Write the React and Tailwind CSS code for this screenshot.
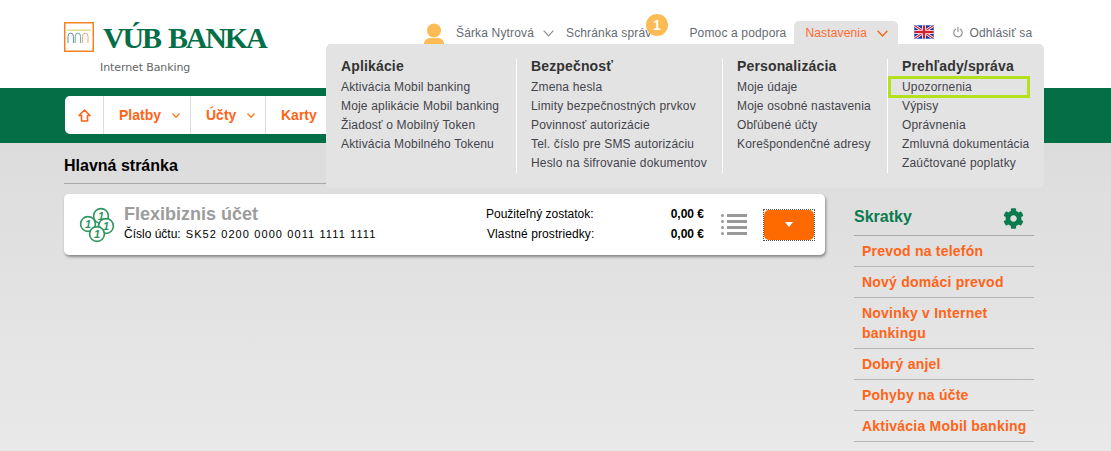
import React from "react";
import { FaCog } from "react-icons/fa";

const F = { fontFamily: '"Liberation Sans", Arial, sans-serif' };

function Chevron({ className, w = 12, h = 7, sw = 1.5 }) {
  return (
    <svg width={w} height={h} viewBox="0 0 12 7" className={className} fill="none" stroke="currentColor" strokeWidth={sw} preserveAspectRatio="none">
      <path d="M0.7 0.7 L6 6 L11.3 0.7" />
    </svg>
  );
}

function Logo() {
  return (
    <div className="flex flex-col pl-[64px] pt-[22px]">
      <div className="flex items-start">
        <svg width="30" height="30" viewBox="0 0 30 30" className="shrink-0">
          <rect x="0.75" y="0.75" width="28.5" height="28.5" fill="#fff" stroke="#f58220" strokeWidth="1.5" />
          <rect x="3" y="7.5" width="24" height="1.5" fill="#e8dc8c" />
          <path d="M4 21 V14.5 a2.7 3.4 0 0 1 5.4 0 V21" fill="none" stroke="#5f8fb0" strokeWidth="1" />
          <path d="M11.2 21 V14.5 a2.7 3.4 0 0 1 5.4 0 V21" fill="none" stroke="#6fa59a" strokeWidth="1" />
          <path d="M18.6 21 V14.5 a2.7 3.4 0 0 1 5.4 0 V21" fill="none" stroke="#e0a580" strokeWidth="1" />
        </svg>
        <span
          className="ml-[9px] text-[#046f47] font-bold text-[30px] leading-[30px] mt-[1px] tracking-[-2.2px] [word-spacing:3px] whitespace-nowrap"
          style={{ fontFamily: '"Liberation Serif", serif' }}
        >
          VÚB BANKA
        </span>
      </div>
      <div className="ml-[36px] mt-[7px] text-[11px] leading-[16px] text-[#666] tracking-[-0.1px]" style={{ fontFamily: '"DejaVu Sans", sans-serif' }}>
        Internet Banking
      </div>
    </div>
  );
}

function Flag() {
  return (
    <svg width="20" height="14" viewBox="0 0 60 42" className="shrink-0">
      <rect width="60" height="42" fill="#25339a" />
      <path d="M0 0 L60 42 M60 0 L0 42" stroke="#fff" strokeWidth="8" />
      <path d="M0 0 L60 42 M60 0 L0 42" stroke="#d3202e" strokeWidth="3.5" />
      <path d="M30 0 V42 M0 21 H60" stroke="#fff" strokeWidth="12" />
      <path d="M30 0 V42 M0 21 H60" stroke="#d3202e" strokeWidth="7" />
      <rect x="0.75" y="0.75" width="58.5" height="40.5" fill="none" stroke="#7fb0ee" strokeWidth="1.5" />
    </svg>
  );
}

function TopBar() {
  return (
    <div className="absolute top-[21px] left-[424px] flex h-[23px] text-[12px] text-[#666b73] tracking-[0.15px] whitespace-nowrap">
      <svg width="20" height="21" viewBox="0 0 20 21" className="mt-[2px] shrink-0">
        <circle cx="10" cy="7.5" r="7" fill="#fdbb55" />
        <path d="M0 21 C0 17 3 15 7 15 H13 C17 15 20 17 20 21 Z" fill="#fdbb55" />
      </svg>
      <span className="ml-[12px] mt-[4px] leading-[16px]">Šárka Nytrová</span>
      <Chevron className="ml-[9px] mt-[9px] text-[#8a8a8a]" w={11} h={7} sw={1.2} />
      <span className="relative ml-[12px] mt-[4px] leading-[16px]">
        Schránka správ
        <span className="absolute left-[80px] top-[-11px] w-[22px] h-[22px] rounded-full bg-[#fdbb55] text-white font-bold text-[14px] leading-[22px] text-center tracking-normal">1</span>
      </span>
      <span className="ml-[38px] mt-[4px] leading-[16px]">Pomoc a podpora</span>
      <div className="ml-[8px] w-[104px] h-[23px] bg-[#e3e3e3] rounded-t-[5px] flex text-[#ff6b2b]">
        <span className="ml-[11px] mt-[4px] leading-[16px]">Nastavenia</span>
        <Chevron className="ml-[10px] mt-[9px] text-[#f26a1b]" w={11} h={7} sw={1.5} />
      </div>
      <div className="ml-[16px] mt-[4px]"><Flag /></div>
      <svg width="10" height="11" viewBox="0 0 10 11" className="ml-[19px] mt-[6px] text-[#8a8a8a]" fill="none" stroke="currentColor" strokeWidth="1.1">
        <path d="M3 2 A4.2 4.2 0 1 0 7 2 M5 0 V5" />
      </svg>
      <span className="ml-[6px] mt-[4px] leading-[16px]">Odhlásiť sa</span>
    </div>
  );
}

const menu = [
  { t: "Aplikácie", w: 190, pl: 15, items: ["Aktivácia Mobil banking", "Moje aplikácie Mobil banking", "Žiadosť o Mobilný Token", "Aktivácia Mobilného Tokenu"] },
  { t: "Bezpečnosť", w: 206, pl: 14, items: ["Zmena hesla", "Limity bezpečnostných prvkov", "Povinnosť autorizácie", "Tel. číslo pre SMS autorizáciu", "Heslo na šifrovanie dokumentov"] },
  { t: "Personalizácia", w: 165, pl: 14, items: ["Moje údaje", "Moje osobné nastavenia", "Obľúbené účty", "Korešpondenčné adresy"] },
  { t: "Prehľady/správa", w: 157, pl: 14, items: ["Upozornenia", "Výpisy", "Oprávnenia", "Zmluvná dokumentácia", "Zaúčtované poplatky"] },
];

function Menu() {
  return (
    <div className="absolute left-[326px] top-[44px] w-[718px] h-[144px] bg-[#e3e3e3] rounded-[5px] flex pt-[15px] z-10">
      {menu.map((c, i) => (
        <div key={c.t} className={`h-[114px] ${i > 0 ? "border-l border-white" : ""}`} style={{ width: c.w, paddingLeft: c.pl }}>
          <div className="font-bold text-[14px] leading-[15px] text-[#333] tracking-[0.15px] whitespace-nowrap">{c.t}</div>
          <div className="mt-[4px]">
            {c.items.map((it) => (
              <div key={it} className="relative h-[19px] text-[12px] leading-[19px] text-[#44444c] tracking-[0.17px] whitespace-nowrap">
                {it}
                {it === "Upozornenia" && <span className="absolute left-[-14px] top-[-2px] w-[142px] h-[22px] border-[3px] border-[#b5e01e]" />}
              </div>
            ))}
          </div>
        </div>
      ))}
    </div>
  );
}

function NavItem({ label, chevron, w }) {
  return (
    <div className="h-full flex items-center border-r border-[#dcdcdc] pl-[15px] font-bold text-[14px] text-[#ff6418]" style={{ width: w }}>
      <span>{label}</span>
      {chevron && <Chevron className="ml-[11px] text-[#ff7a1a]" w={8} h={5} sw={2} />}
    </div>
  );
}

function GreenBar() {
  return (
    <div className="h-[55px] bg-[#046f47] pt-[8px] pl-[65px]">
      <div className="w-[300px] h-[38px] bg-white rounded-[5px] flex items-center">
        <div className="w-[39px] h-full flex items-center justify-center border-r border-[#dcdcdc]">
          <svg width="13" height="13" viewBox="0 0 13 13" fill="none" stroke="#ff6418" strokeWidth="1.6" strokeLinejoin="round">
            <path d="M6.5 1 L12 6.5 H9.5 V12 H3.5 V6.5 H1 Z" />
          </svg>
        </div>
        <NavItem label="Platby" chevron w={87} />
        <NavItem label="Účty" chevron w={75} />
        <div className="pl-[15px] font-bold text-[14px] text-[#ff6418]">Karty</div>
      </div>
    </div>
  );
}

function Coins() {
  const c = [[22, 9], [9, 17], [27, 19], [18, 27]];
  return (
    <svg width="36" height="36" viewBox="0 0 36 36" className="shrink-0">
      {c.map(([x, y]) => (
        <g key={`${x}-${y}`}>
          <circle cx={x} cy={y} r="7.4" fill="#fff" stroke="#2f9561" strokeWidth="1.6" />
          <text x={x} y={y + 4} textAnchor="middle" fontSize="11" fontWeight="700" fill="#2f9561" fontFamily="Liberation Sans" fontStyle="italic">1</text>
        </g>
      ))}
    </svg>
  );
}

function ListIcon() {
  return (
    <div className="flex flex-col gap-[3px] w-[26px] shrink-0">
      {[0, 1, 2, 3].map((i) => (
        <div key={i} className="flex items-center gap-[3px]">
          <span className="w-[3px] h-[3px] rounded-full bg-[#999]" />
          <span className="w-[20px] h-[3px] bg-[#999]" />
        </div>
      ))}
    </div>
  );
}

function AccountCard() {
  return (
    <div className="w-[761px] h-[61px] bg-white rounded-[5px] shadow-[1px_2px_3px_rgba(0,0,0,0.4)] flex items-center">
      <div className="ml-[15px]"><Coins /></div>
      <div className="ml-[9px] w-[350px] mt-[-3px]">
        <div className="font-bold text-[18px] leading-[20px] text-[#9c9c9c]">Flexibiznis účet</div>
        <div className="flex text-[12px] leading-[16px] mt-[2px] text-black whitespace-nowrap">
          <span>Číslo účtu:</span>
          <span className="ml-[5px] text-[11px] tracking-[1.1px]">SK52 0200 0000 0011 1111 1111</span>
        </div>
      </div>
      <div className="ml-[12px] w-[218px] text-[12px] leading-[20px] text-black mt-[-1px]">
        <div className="flex justify-between"><span>Použiteľný zostatok:</span><b className="font-bold">0,00 €</b></div>
        <div className="flex justify-between pl-[1px]"><span className="tracking-[0.1px]">Vlastné prostriedky:</span><b className="font-bold">0,00 €</b></div>
      </div>
      <div className="ml-[17px]"><ListIcon /></div>
      <div className="ml-[16px] w-[52px] h-[32px] border border-dotted border-[#555] flex">
        <div className="flex-1 bg-[#ff6a00] rounded-[5px] flex items-center justify-center">
          <span className="w-0 h-0 border-l-[4px] border-r-[4px] border-t-[5px] border-l-transparent border-r-transparent border-t-white" />
        </div>
      </div>
    </div>
  );
}

const links = [
  "Prevod na telefón",
  "Nový domáci prevod",
  "Novinky v Internet bankingu",
  "Dobrý anjel",
  "Pohyby na účte",
  "Aktivácia Mobil banking",
];

function Sidebar() {
  return (
    <div className="w-[180px] ml-[29px]">
      <div className="flex items-center justify-between h-[42px] pr-[10px] border-b border-[#aaa]">
        <span className="font-bold text-[16px] text-[#0a7a4f] mt-[5px]">Skratky</span>
        <FaCog size={21} className="text-[#0a7a4f] mt-[8px]" />
      </div>
      {links.map((l) => (
        <div key={l} className="border-b border-[#b5b5b5] pl-[8px] pr-[30px] py-[5px] font-bold text-[14px] leading-[20px] text-[#ff6418] tracking-[0.22px] last:pr-0">
          {l}
        </div>
      ))}
    </div>
  );
}

export default function App() {
  return (
    <div className="relative w-[1111px] h-[451px] overflow-hidden bg-white" style={F}>
      <div className="h-[88px]"><Logo /></div>
      <TopBar />
      <Menu />
      <GreenBar />
      <div className="h-[308px] bg-gradient-to-b from-[#dcdcdc] to-[#e9e9e9] pl-[64px] pt-[14px]">
        <div className="w-[761px] h-[27px] border-b border-[#a8a8a8] font-bold text-[16px] leading-[18px] text-black">Hlavná stránka</div>
        <div className="flex mt-[10px] items-start">
          <AccountCard />
          <Sidebar />
        </div>
      </div>
    </div>
  );
}
